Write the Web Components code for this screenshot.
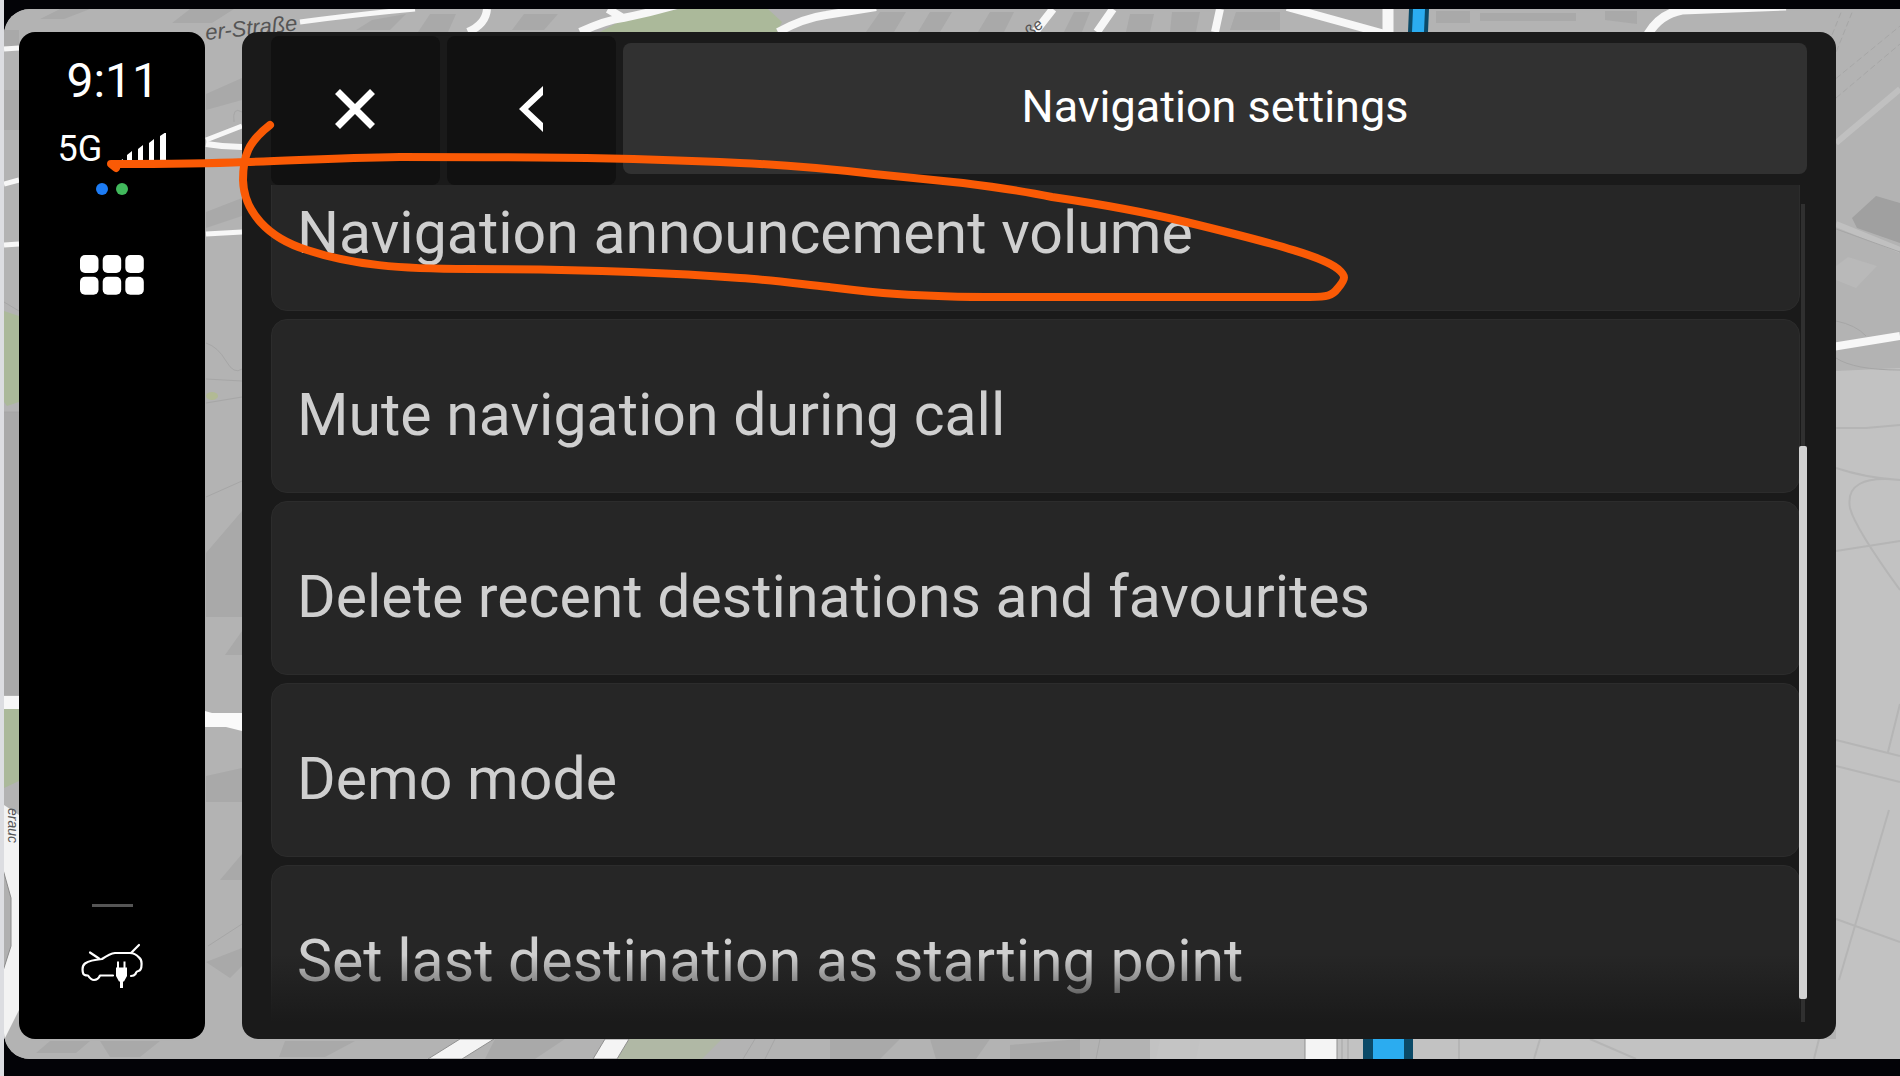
<!DOCTYPE html>
<html lang="en">
<head>
<meta charset="utf-8">
<title>Navigation settings</title>
<style>
  html {
    height: 100%;
    background: #dcdde1;
  }
  body {
    margin: 0 0 0 4px;
    height: 100%;
    background: #030307;
    font-family: Roboto, sans-serif;
  }
</style>
</head>
<body>
<car-display>
  <map-view slot="map"></map-view>
  <side-bar time="9:11" network="5G"></side-bar>
  <settings-panel heading="Navigation settings">
    <settings-item>Navigation announcement volume</settings-item>
    <settings-item>Mute navigation during call</settings-item>
    <settings-item>Delete recent destinations and favourites</settings-item>
    <settings-item>Demo mode</settings-item>
    <settings-item>Set last destination as starting point</settings-item>
  </settings-panel>
  <ink-note slot="overlay"></ink-note>
</car-display>

<script>
class CarDisplay extends HTMLElement {
  constructor() {
    super();
    this.attachShadow({ mode: "open" }).innerHTML = `
      <style>
        :host {
          display: block;
          box-sizing: border-box;
          position: relative;
          height: 100vh;
          padding: 9px 0 17px;
        }
        .screen {
          position: relative;
          box-sizing: border-box;
          display: flex;
          gap: 37px;
          height: 100%;
          padding: 23px 64px 20px 15px;
          border-radius: 26px 0 0 26px;
          overflow: hidden;
          background: #b4b4b4;
        }
      </style>
      <div class="screen">
        <slot name="map"></slot>
        <slot></slot>
      </div>
      <slot name="overlay"></slot>
    `;
  }
}
customElements.define("car-display", CarDisplay);

class MapView extends HTMLElement {
  constructor() {
    super();
    this.attachShadow({ mode: "open" }).innerHTML = `
      <style>
        :host {
          position: absolute;
          inset: 0;
        }
        svg {
          display: block;
          width: 100%;
          height: 100%;
        }
        .road { fill: none; stroke: #f7f7f7; }
        .line { fill: none; stroke: #a6a6a6; stroke-width: 1; }
        .lane { fill: none; stroke: #c0c0c0; }
        .park { fill: #abb99a; }
        .block { fill: #a9a9a9; }
        text { fill: #555; font: italic 22px "Liberation Sans", sans-serif; }
      </style>
      <svg viewBox="4 9 1896 1050" preserveAspectRatio="xMinYMin slice" aria-hidden="true">
        <!-- ground -->
        <rect x="0" y="0" width="1900" height="1076" fill="#b3b3b3"/>
        <path d="M1836 371 L1900 368 V1076 H1150 V1039 H1836Z" fill="#c2c2c2"/>

        <!-- buildings, top and left -->
        <path class="block" d="M190 9h44l-22 14h-40zM60 9h30l-26 10H40zM372 20l34-6-16 16h-34zM430 14h26l-8 18h-30zM524 14h34l-14 16h-32zM690 28l60-2v6h-64z"/>
        <path class="block" d="M880 12h26l-12 20h-28zM930 12h22l-12 20h-22zM990 12h24l-10 20h-26zM1074 12h16l-8 20h-18zM1130 14h24l-4 18h-24zM1172 12h28l-4 20h-26zM1236 12h44v18h-50zM1436 11h34v12h-34zM1480 13h96v8h-96zM1605 11h32v13l-32-4z"/>
        <path class="block" d="M206 94l36-16v22l-36 10zM206 212l36-14v18l-36 12zM206 553l36-42v106h-36zM225 655l17-24v24zM206 776l36-8v34h-36zM220 880l22-26v26zM206 962l36-14v18l-12 12z"/>
        <path class="block" d="M4 30h15v16H4zM4 90h15v40H4zM4 412h15v283H4z"/>
        <path class="block" d="M50 1041h40l-14 12H36zM100 1041h60l-20 16h-30zM285 1041h70l-30 16h-46zM495 1039h70l-30 20h-50zM830 1039h70l-20 20h-50zM930 1039h60l-14 20h-40zM1010 1045l70-6v20h-70z"/>

        <!-- parks -->
        <path class="park" d="M600 32l26-14 54-9h88l14 13-5 10z"/>
        <path class="park" d="M4 311l15 5v86l-12 4-3-4zM4 709h15v72l-15 7z"/>
        <path d="M622 1039h100l-20 20h-84z" fill="#b0b8a5"/>
        <ellipse cx="212" cy="396" rx="6" ry="4" fill="#b2ba94"/>

        <!-- thin lines -->
        <path class="line" d="M4 302l15 9M206 343q12 4 20 18t16 8M206 379l36 2M206 403l36-6M206 497l36-16M208 946l34-22M242 112q-10-6-8 10M4 412h15"/>
        <path class="lane" stroke-width="6" d="M1836 143l64-54M1836 224l64 26"/>
        <path class="line" stroke-dasharray="6 3" d="M1822 90l78-64M1822 60l20-50M1833 60l20-50M1836 98l64-54"/>
        <path class="line" d="M1836 229l64 23M1836 321q20 4 30 15M1836 358q18 12 64 12"/>
        <path d="M1852 218l24-22 24 7v40l-43-15z" fill="#a0a0a0"/>
        <path d="M1836 266l12-9 29 9-21 22-20-8z" fill="#b9b9b9"/>
        <path class="line" style="stroke:#b5b5b5;stroke-width:2" d="M1836 428h30l34-3M1836 468q30 10 64 12M1836 551l64-10M1900 480q-56-6-50 28 5 20 50 82M1836 740l64 16M1836 766l64 16M1888 752l12-48M1889 810l-50 170M1836 919l64 23M1814 1059l5-20M1590 1039l46 20M1540 1039l-6 20M1459 1039v20"/>
        <path class="line" d="M755 1039l-12 20M775 1039l-10 20M1100 1039l-4 20M1342 1039v20M1348 1039v20"/>
        <path d="M1160 1039h30v20h-34zM1200 1039h100v20h-104z" fill="#c4c4c4"/>

        <!-- streets -->
        <g class="road" stroke-width="5">
          <path d="M4 49l15-1M4 184l15-4M4 245l15-1M206 140l36-14M206 234l36-2M300 22q60-8 115-13"/>
          <path stroke-width="6" d="M206 144q18 3 36 3"/>
          <path stroke-width="8" d="M487 9q-1 15-19 23M608 9l15 9M580 32q26-12 43-14 30-6 57-14M778 32q26-14 48-17l50-8"/>
          <path stroke-width="8" d="M1053 9l-18 23M1113 9l-16 23M1220 9l-5 23M1287 7l98 27"/>
          <path stroke-width="11" d="M1388 9v23"/>
          <path stroke-width="9" d="M1648 34q12-20 34-24l104-4"/>
          <path stroke-width="8" d="M1832 347l68-11"/>
          <path stroke-width="13" d="M4 702.5h15"/>
        </g>
        <path fill="#fafafa" d="M205 711l7 2h30v18l-16-4h-21z"/>
        <path fill="#f4f4f4" stroke="#909090" d="M460 1039h34l-32 20h-34zM605 1039h24l-12 20h-24z"/>
        <rect x="1305" y="1037" width="32" height="24" fill="#f4f4f4" stroke="#909090"/>
        <path fill="#f3f3f3" d="M4 805l15 10v195l-15 30z"/>
        <path fill="#b0b0b0" stroke="#8a8a8a" d="M2 866l9 32v48l-9 28z"/>

        <!-- route -->
        <path fill="#0b4a68" d="M1409 9h20l-1 23h-20zM1363 1039h50v20h-50z"/>
        <path fill="#2bacf0" d="M1413 9h12l-1 23h-12zM1373 1039h31v20h-31z"/>

        <!-- street names -->
        <text x="206" y="40" transform="rotate(-6 206 40)">er-Straße</text>
        <text x="8" y="808" transform="rotate(90 8 808)" style="font-size:14px">erauc</text>
        <text x="1030" y="38" transform="rotate(-40 1030 38)" style="font-size:16px">ße</text>
      </svg>
    `;
  }
}
customElements.define("map-view", MapView);

class SideBar extends HTMLElement {
  constructor() {
    super();
    this.attachShadow({ mode: "open" });
  }

  connectedCallback() {
    this.render();
  }

  render() {
    this.shadowRoot.innerHTML = `
      <style>
        :host {
          position: relative;
          box-sizing: border-box;
          flex: none;
          display: flex;
          flex-direction: column;
          align-items: center;
          width: 186px;
          padding: 21px 0 48px;
          border-radius: 16px;
          background: #000;
          color: #fff;
        }
        svg { display: block; }
        time {
          align-self: flex-end;
          padding-right: 46px;
          font-size: 48px;
          line-height: 56px;
        }
        .status {
          display: flex;
          gap: 16px;
          margin-top: 24px;
          font-size: 36px;
          line-height: 32px;
        }
        .dots {
          display: flex;
          gap: 8px;
          margin-top: 18px;
        }
        .dots i {
          width: 12px;
          height: 12px;
          border-radius: 50%;
          background: #1d7cf5;
        }
        .dots i + i { background: #41b95c; }
        button {
          padding: 0;
          border: 0;
          background: none;
          color: inherit;
        }
        .apps { margin-top: 60px; }
        hr {
          width: 41px;
          height: 3px;
          margin: auto 0 36px;
          border: 0;
          background: #555;
        }
      </style>
      <time>${this.getAttribute("time")}</time>
      <div class="status">
        <span>${this.getAttribute("network")}</span>
        <svg width="48" height="32" viewBox="0 0 48 32" fill="currentColor" role="img" aria-label="Signal strength">
          <path d="M0 29l5-3v3zM9 22l5-4v12H9zM20 16l5-4v18h-5zM31 10l5-4v24h-5zM42 3l6-4v31h-6z"/>
        </svg>
      </div>
      <div class="dots"><i></i><i></i></div>
      <button class="apps" aria-label="Apps">
        <svg width="64" height="40" viewBox="0 0 64 40" fill="currentColor">
          <rect x="0" y="0" width="18.5" height="18" rx="5"/>
          <rect x="22.7" y="0" width="18.5" height="18" rx="5"/>
          <rect x="45.3" y="0" width="18.5" height="18" rx="5"/>
          <rect x="0" y="21.7" width="18.5" height="18" rx="5"/>
          <rect x="22.7" y="21.7" width="18.5" height="18" rx="5"/>
          <rect x="45.3" y="21.7" width="18.5" height="18" rx="5"/>
        </svg>
      </button>
      <hr>
      <button aria-label="Vehicle charging">
        <svg width="62" height="48" viewBox="81 943 62 48" fill="none" stroke="currentColor" stroke-width="2.2" stroke-linecap="round" stroke-linejoin="round">
          <path d="M113 975.500H100q-2 4.500-6 4.500-3 0-6-4.500-4.500 0-5-2.500-1.500-7 2-9.500 5-3.500 17-4.500 8-5.500 13-6h15q5 0 9 4.500 3 2 2.500 7.500 0 5-3 6-2 0-3 3-1.500 2-4.500 2"/>
          <path d="M90 952.500l9 6M131 953l8-8"/>
          <path fill="currentColor" stroke="none" d="M117 967.500v-6h2v6h4.500v-6h2v6h1.500v8.500l-3 5.500h-1v6.500h-3v-6.500h-1l-3-5.500v-8.500z"/>
        </svg>
      </button>
    `;
  }
}
customElements.define("side-bar", SideBar);

class SettingsItem extends HTMLElement {
  constructor() {
    super();
    this.attachShadow({ mode: "open" }).innerHTML = `
      <style>
        :host {
          flex: none;
          display: block;
        }
        button {
          display: block;
          box-sizing: border-box;
          width: calc(100% - 7px);
          height: 174px;
          padding: 16px 25px 0;
          border: 1px solid #2c2c2c;
          border-radius: 16px;
          background: #262626;
          color: #cfcfcf;
          font: inherit;
          font-size: 59px;
          text-align: left;
          white-space: nowrap;
        }
      </style>
      <button><slot></slot></button>
    `;
  }
}
customElements.define("settings-item", SettingsItem);

class SettingsPanel extends HTMLElement {
  constructor() {
    super();
    this.attachShadow({ mode: "open" });
  }

  connectedCallback() {
    this.render();
    // the list opens scrolled down to its end
    const list = this.shadowRoot.querySelector(".list");
    list.scrollTop = list.scrollHeight;
  }

  render() {
    this.shadowRoot.innerHTML = `
      <style>
        :host {
          position: relative;
          box-sizing: border-box;
          flex: 1;
          min-width: 0;
          display: flex;
          flex-direction: column;
          padding: 4px 29px 0;
          border-radius: 16px;
          overflow: hidden;
          background: #1a1a1a;
        }
        header {
          flex: none;
          display: grid;
          grid-template-columns: 169px 169px 1fr;
          gap: 7px;
          height: 149px;
        }
        header button {
          display: grid;
          place-items: center;
          padding: 0 2px 4px 0;
          border: 0;
          border-radius: 8px;
          background: #111;
          color: #fff;
        }
        h1 {
          display: grid;
          place-items: center;
          margin: 7px 0 11px;
          padding-bottom: 4px;
          border-radius: 8px;
          background: #313131;
          color: #fff;
          font-size: 45px;
          font-weight: 400;
        }
        .scroller {
          position: relative;
          flex: 1;
          min-height: 0;
        }
        .list {
          display: flex;
          flex-direction: column;
          gap: 8px;
          height: 100%;
          overflow: hidden;
        }
        .track {
          position: absolute;
          inset: 19px 2px 17px auto;
          width: 4px;
          background: #303030;
        }
        .thumb {
          position: absolute;
          inset: 242px -2px 23px;
          border-radius: 2px;
          background: #d2d2d2;
        }
        .fade {
          position: absolute;
          inset: auto 0 0;
          height: 84px;
          background: linear-gradient(#1a1a1a00, #1a1a1a 80%);
          pointer-events: none;
        }
      </style>
      <header>
        <button aria-label="Close">
          <svg width="40" height="40" viewBox="0 0 40 40" stroke="currentColor" stroke-width="7"><path d="M2.500 2.500l35 35M37.500 2.500l-35 35"/></svg>
        </button>
        <button aria-label="Back">
          <svg width="24" height="46" viewBox="0 0 24 46" fill="currentColor"><path d="M24 0v9L9 23l15 14v9L0 23z"/></svg>
        </button>
        <h1>${this.getAttribute("heading")}</h1>
      </header>
      <div class="scroller">
        <div class="list"><slot></slot></div>
        <div class="fade"></div>
        <div class="track"><div class="thumb"></div></div>
      </div>
    `;
  }
}
customElements.define("settings-panel", SettingsPanel);

// hand-drawn loop around the first item
class InkNote extends HTMLElement {
  constructor() {
    super();
    this.attachShadow({ mode: "open" }).innerHTML = `
      <style>
        :host {
          position: absolute;
          inset: 0;
          pointer-events: none;
        }
        svg {
          display: block;
          width: 100%;
          height: 100%;
        }
      </style>
      <svg viewBox="4 0 1896 1076" preserveAspectRatio="xMinYMin meet" fill="none" stroke="#fa5a05" stroke-width="8" stroke-linecap="round" stroke-linejoin="round" aria-hidden="true">
        <path d="M270 125C248 142 243 156 243 180C244 212 268 238 307 250C352 265 400 269 470 269C560 269 650 271 740 278C772 280 800 284 829 287C870 292 910 297 1000 297H1310C1327 297 1332 296 1338 288C1346 278 1346 276 1338 269C1325 258 1285 246 1186 222C1140 211 1100 204 1052 197C1023 191 995 187 963 183C935 180 905 177 874 174C830 169 790 165 740 163C620 157 500 157 400 157C330 158 290 161 245 162C200 164 150 164 111 164L116 168"/>
      </svg>
    `;
  }
}
customElements.define("ink-note", InkNote);
</script>
</body>
</html>
